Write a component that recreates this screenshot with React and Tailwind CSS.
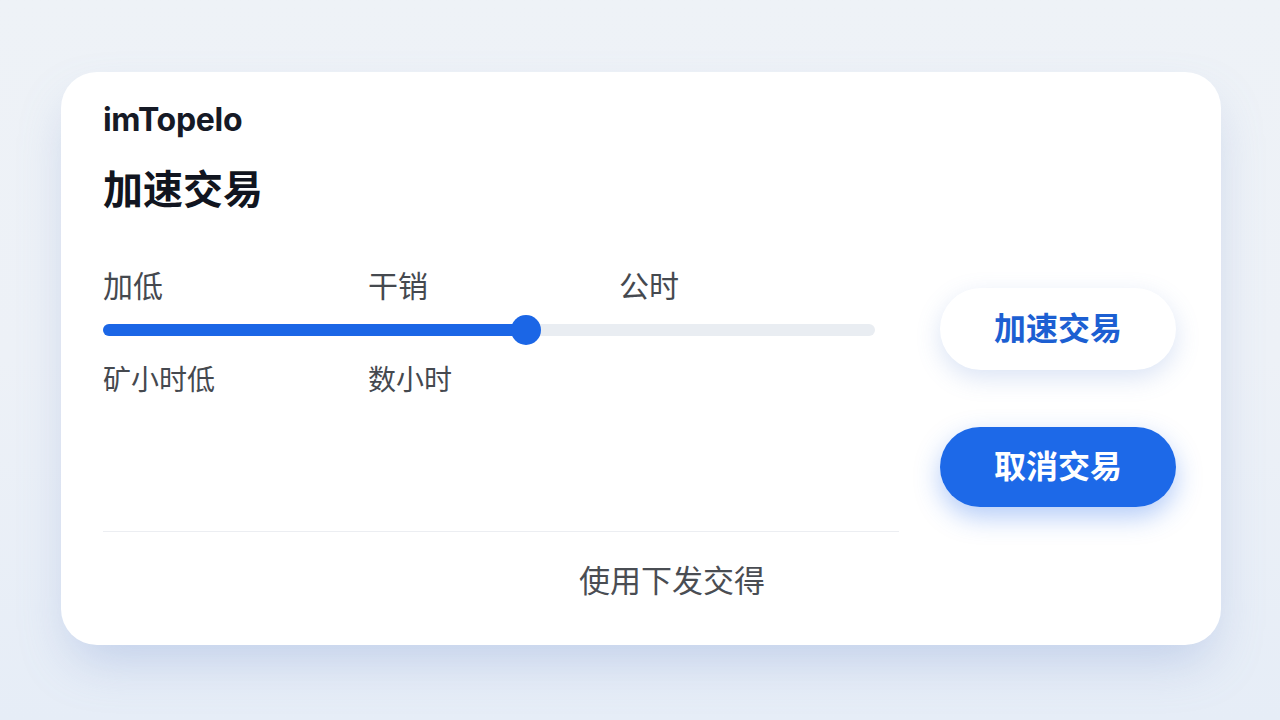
export default function App() {
  const cjk = { fontFamily: "Inter, 'Noto Sans CJK SC', sans-serif" };
  return (
    <div
      className="relative h-[720px] w-[1280px] overflow-hidden bg-gradient-to-b from-[#eef2f7] via-[#edf1f7] to-[#e6edf7] pt-[72px] pl-[61px]"
      style={cjk}
    >
      <div className="flex h-[573px] w-[1160px] rounded-[36px] bg-white pl-[42px] pr-[45px] shadow-[0_24px_50px_-10px_rgba(120,150,210,0.35)]">
        {/* Left column */}
        <div className="flex w-[798px] flex-col">
          <div className="pt-[30px] text-[32px] font-bold leading-[36px] tracking-[-0.3px] text-[#161a26]">
            imTopelo
          </div>
          <h1 className="mt-[28px] text-[40px] font-bold leading-[48px] text-[#111520]">加速交易</h1>

          <div className="mt-[55px] w-[772px]">
            <div className="flex text-[30px] leading-[34px] text-[#45494f]">
              <span className="w-[265px]">加低</span>
              <span className="w-[251px]">干销</span>
              <span>公时</span>
            </div>
            <div className="relative mt-[21px] h-[12px] rounded-full bg-[#e9edf2]">
              <div className="h-[12px] w-[423px] rounded-full bg-[#1b66e6]" />
              <div className="absolute left-[408px] top-[-9px] h-[30px] w-[30px] rounded-full bg-[#1b66e6]" />
            </div>
            <div className="mt-[27px] flex text-[28px] leading-[34px] text-[#45494f]">
              <span className="w-[265px]">矿小时低</span>
              <span>数小时</span>
            </div>
          </div>

          <div className="mt-auto h-px w-[796px] bg-[#eceef2]" />
          <div className="flex h-[113px] items-center pl-[476px] pb-[14px] text-[31px] text-[#4a4d53]">
            使用下发交得
          </div>
        </div>

        {/* Right column */}
        <div className="flex flex-1 flex-col items-end pt-[216px]">
          <button className="h-[82px] w-[236px] rounded-full bg-white text-[32px] font-bold text-[#1c5fd2] shadow-[0_8px_24px_rgba(90,130,210,0.22)]">
            加速交易
          </button>
          <button className="mt-[57px] h-[80px] w-[236px] rounded-full bg-[#1d69e8] text-[32px] font-bold text-white shadow-[0_10px_26px_rgba(40,110,235,0.35)]">
            取消交易
          </button>
        </div>
      </div>
    </div>
  );
}
